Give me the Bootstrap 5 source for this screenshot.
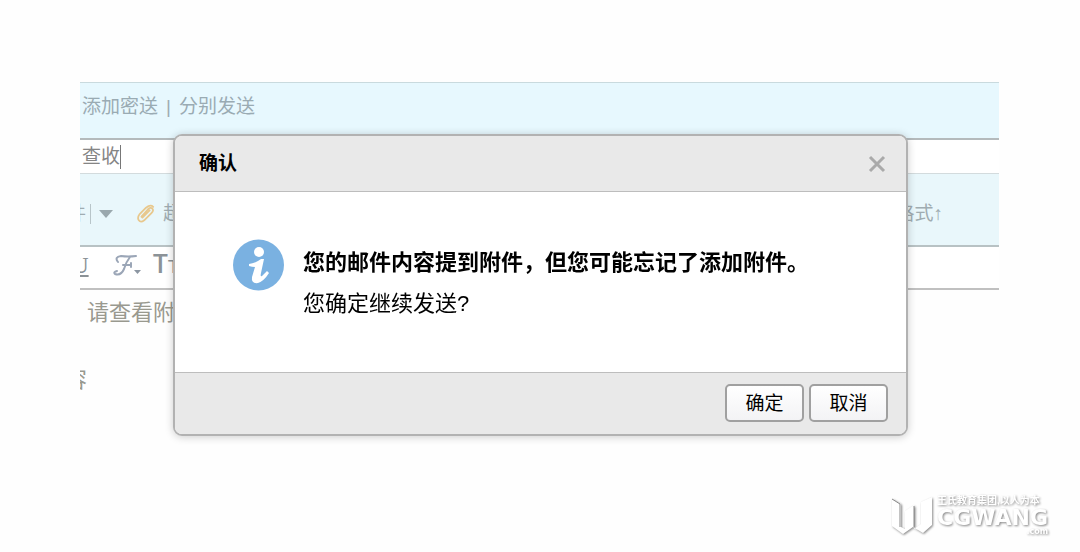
<!DOCTYPE html>
<html lang="zh-CN">
<head>
<meta charset="utf-8">
<meta name="viewport" content="width=device-width, initial-scale=1">
<title>确认</title>
<link href="https://cdn.jsdelivr.net/npm/bootstrap@5.3.0/dist/css/bootstrap.min.css" rel="stylesheet">
<style>
body{font-family:"Liberation Sans","Noto Sans CJK SC",sans-serif;font-size:19px;line-height:28px;color:#000;background:#fefefe;min-height:100vh}
.mail{margin:82px 81px 0 80px;color:#a0acb1}
.tint{background:#e7f8fe}
.copy-row{height:58px;border-top:1px solid #c9dade;border-bottom:2px solid #b4babc;padding:0 2px 8px}
.copy-row a{color:#9aabb3}
.subject-row{height:33px;padding-left:2px}
.subject-row input{width:38px;border:0;padding:0;background:none;color:#858585}
.caret{width:1px;height:24px;background:#777}
.tool-row{height:74px;border-top:1px solid #d3dbdd;border-bottom:2px solid #b8c2c4;padding:8px 56px 0 0;background:#e9f7fb}
.format-row{height:43px;border-bottom:2px solid #c0c0c0;padding-bottom:4px}
.plain{border:0;background:none;padding:0;color:inherit;line-height:28px;white-space:nowrap}
.cut{margin-left:-13px}
.cut-u{margin-left:-8px;color:#8b9297;font:bold 23px/28px "Liberation Serif",serif;text-decoration:underline}
.split{width:1px;height:20px;background:#b8c5c9}
.size-icon{margin-left:12px;color:#8b9297;font-size:19px;font-family:Roboto,sans-serif}
.size-icon b{font-size:25px;font-weight:500}
.letter{font-size:22px;line-height:33px;color:#99998f;padding-top:6px}
.letter p:first-child{padding-left:7px;margin-bottom:34px}
.letter p:last-child{margin-left:-15px}
.modal{padding-left:1px;--bs-modal-width:735px}
.modal-dialog{max-width:735px;margin:134px auto 0}
.modal-content{border:2px solid #b2b2b2;border-radius:9px;box-shadow:0 1px 9px rgba(0,0,0,.2);color:#000;background:#fff}
.modal-header,.modal-footer{background:#e9e9e9;border-color:#bdbdbd;border-radius:0}
.modal-header{height:56px;padding:0 20px 0 24px;border-radius:7px 7px 0 0}
.modal-title{font-size:19px;line-height:28px}
.modal-footer{height:62px;padding:0 18px 2px;gap:5px;border-radius:0 0 7px 7px}
.modal-footer>.btn{margin:0;width:79px;height:38px;padding:2px 0 0;font-size:19px;line-height:28px;color:#000;border:2px solid #a0a0a0;border-radius:5px;background:linear-gradient(#fff,#f3f3f5)}
.modal-body{height:180px;padding:46px 57px 0 58px;font-size:22px;gap:19px}
.modal-body p{margin:0;line-height:41px}
.message{padding-top:4px}
.modal-body svg{margin-top:1px}
.brand{right:32px;bottom:16px;color:#fff;filter:drop-shadow(1px 1px 1px #888);z-index:1060}
.brand-tag{font-size:10px;line-height:12px;font-weight:700}
.brand-name{font:bold 22px/21px "DejaVu Sans",sans-serif}
.brand-com{font:bold 8px/8px "DejaVu Sans",sans-serif}
</style>
</head>
<body class="position-relative overflow-hidden">
<main class="mail overflow-hidden">
  <div class="copy-row tint d-flex align-items-center gap-2">
    <a href="#" class="text-decoration-none">添加密送</a><span>|</span><a href="#" class="text-decoration-none">分别发送</a>
  </div>
  <div class="subject-row bg-white d-flex align-items-center">
    <input type="text" value="查收" aria-label="主题"><span class="caret"></span>
  </div>
  <div class="tool-row d-flex align-items-center">
    <button class="plain cut" type="button">件</button>
    <span class="split ms-1 me-2"></span>
    <button class="plain d-flex" type="button" aria-label="更多附件"><svg width="14" height="8"><path d="M0 0H14L7 8Z" fill="#9aa8ad"/></svg></button>
    <button class="plain d-flex align-items-center gap-2 ms-4" type="button"><svg width="18" height="22" viewBox="0 0 20 22" fill="none" stroke="#e8c88d" stroke-width="2" stroke-linecap="round"><path d="M5 14 12 6Q15 3 17 5T16 10L8 18Q4 21 2 18T3 11L10 4Q15 0 18 3M6 15 14 7"/></svg>超大附件</button>
    <button class="plain ms-auto" type="button">格式↑</button>
  </div>
  <div class="format-row bg-white d-flex align-items-center">
    <button class="plain cut-u" type="button">U</button>
    <button class="plain ms-4" type="button" aria-label="字体"><svg width="28" height="24" viewBox="0 0 28 24" fill="none" stroke="#9ba6b7" stroke-width="2" stroke-linecap="round"><path d="M5 8Q1 3 8 2Q15 3 23 2M17 3Q13 8 11 15Q8 22 2 20Q0 18 4 17M10 11H18M18 9V13"/><path d="M21 16H28L24.500 20Z" fill="#8c96a2" stroke="none"/></svg></button>
    <button class="plain size-icon" type="button" aria-label="字号"><b>T</b>T</button>
  </div>
  <div class="letter"><p>请查看附件</p><p>容</p></div>
</main>

<div class="modal d-block" role="dialog" aria-modal="true" aria-labelledby="dialog-title">
  <div class="modal-dialog"><div class="modal-content">
    <div class="modal-header">
      <h1 class="modal-title fw-bold" id="dialog-title">确认</h1>
      <button class="plain d-flex" type="button" aria-label="关闭"><svg width="18" height="18" stroke="#aaa" stroke-width="3"><path d="M2 2 16 16M16 2 2 16"/></svg></button>
    </div>
    <div class="modal-body d-flex align-items-start">
      <svg width="51" height="52" viewBox="0 0 51 52"><circle cx="25.500" cy="26" r="25.500" fill="#7ab1e1"/><circle cx="26" cy="13" r="5" fill="#fff"/><path d="M16 25Q23 24 28 20H31L28 34Q27 38 29 37L34 32 36 34Q31 42 25 44Q18 45 19 38L22 28Q19 28 16 27Z" fill="#fff"/></svg>
      <div class="message"><p class="fw-bold">您的邮件内容提到附件，但您可能忘记了添加附件。</p><p>您确定继续发送?</p></div>
    </div>
    <div class="modal-footer">
      <button class="btn" type="button">确定</button><button class="btn" type="button">取消</button>
    </div>
  </div></div>
</div>

<div class="brand position-absolute d-flex align-items-center gap-1">
  <svg width="42" height="40" viewBox="0 0 42 40" fill="#fff"><path d="M1 3 10 8V31L14 33V15L23 9V33L30 28V6L41 1V29L32 37 22 31 12 38 1 30Z"/><path d="M1 3 9 8V31M23 10V31" fill="none" stroke="#888"/></svg>
  <div class="d-flex flex-column"><span class="brand-tag">王氏教育集团,以人为本</span><span class="brand-name">CGWANG</span><span class="brand-com align-self-end">.com</span></div>
</div>
<script src="https://cdn.jsdelivr.net/npm/bootstrap@5.3.0/dist/js/bootstrap.bundle.min.js"></script>
</body>
</html>
